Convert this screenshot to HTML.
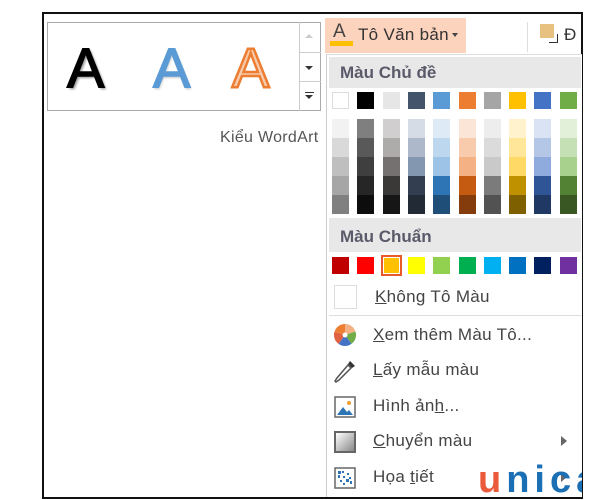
<!DOCTYPE html>
<html><head><meta charset="utf-8"><style>
*{margin:0;padding:0;box-sizing:border-box}
body{width:600px;height:500px;background:#fff;position:relative;overflow:hidden;font-family:"Liberation Sans","DejaVu Sans",sans-serif}
.a{position:absolute}
.sw{position:absolute;width:17px;height:17px}
.sh{position:absolute;width:17px;height:19px}
.t{position:absolute;font-size:17px;color:#444;white-space:nowrap;letter-spacing:0.3px}
u{text-decoration:underline}
</style></head><body>
<div class="a" style="left:42px;top:12px;width:541px;height:487px;border:2px solid #111"></div>
<!-- gallery -->
<div class="a" style="left:47px;top:22px;width:274px;height:89px;border:1px solid #aaa"></div>
<div class="a" style="left:299px;top:22px;width:1px;height:89px;background:#ccc"></div>
<div class="a" style="left:299px;top:52px;width:22px;height:1px;background:#ccc"></div>
<div class="a" style="left:299px;top:81px;width:22px;height:1px;background:#ccc"></div>
<div class="a" style="left:305px;top:34px;width:0;height:0;border-left:4px solid transparent;border-right:4px solid transparent;border-bottom:4px solid #ccc"></div>
<div class="a" style="left:305px;top:66px;width:0;height:0;border-left:4px solid transparent;border-right:4px solid transparent;border-top:4px solid #333"></div>
<div class="a" style="left:305px;top:92px;width:9px;height:1px;background:#333"></div>
<div class="a" style="left:305px;top:95px;width:0;height:0;border-left:4px solid transparent;border-right:4px solid transparent;border-top:4px solid #333"></div>
<div class="t" style="left:67px;top:38px;font-size:56px;color:#000;text-shadow:2px 2px 2px #999;line-height:60px;-webkit-text-stroke:1.5px #000">A</div>
<div class="t" style="left:153px;top:38px;font-size:56px;color:#5b9bd5;text-shadow:1px 2px 2px #ccc;line-height:60px;-webkit-text-stroke:1.5px #5b9bd5">A</div>
<div class="t" style="left:232px;top:38px;font-size:56px;color:#f8cbad;-webkit-text-stroke:2.5px #ed7d31;line-height:60px">A</div>
<div class="t" style="left:220px;top:129px;font-size:16px;color:#555">Kiểu WordArt</div>
<!-- button -->
<div class="a" style="left:325px;top:18px;width:141px;height:35px;background:#fcd3bd"></div>
<div class="t" style="left:333px;top:21px;font-size:19px;color:#444">A</div>
<div class="a" style="left:330px;top:41px;width:23px;height:5px;background:#ffc000"></div>
<div class="t" style="left:358px;top:25px;font-size:17px;color:#333">Tô Văn bản</div>
<div class="a" style="left:452px;top:33px;border-left:3.5px solid transparent;border-right:3.5px solid transparent;border-top:4px solid #444"></div>
<div class="a" style="left:527px;top:22px;width:1px;height:30px;background:#ddd"></div>
<div class="a" style="left:540px;top:24px;width:14px;height:14px;background:#e8c080"></div>
<div class="a" style="left:549px;top:34px;width:9px;height:9px;border-right:1px solid #333;border-bottom:1px solid #333"></div>
<div class="t" style="left:564px;top:25px;font-size:17px;color:#333">Đ</div>
<!-- panel -->
<div class="a" style="left:326px;top:54px;width:256px;height:443px;border-left:1px solid #ccc;border-top:1px solid #ddd;background:#fff"></div>
<div class="a" style="left:329px;top:57px;width:252px;height:31px;background:#e8e8e8"></div>
<div class="t" style="left:340px;top:63px;font-size:17px;font-weight:bold;color:#5a5a6a;letter-spacing:0">Màu Chủ đề</div>
<div class="a" style="left:329px;top:218px;width:252px;height:34px;background:#e8e8e8"></div>
<div class="t" style="left:340px;top:227px;font-size:17px;font-weight:bold;color:#5a5a6a;letter-spacing:0">Màu Chuẩn</div>
<div id="g"></div>
<div class="a" style="left:334px;top:285px;width:23px;height:24px;border:1px solid #ddd"></div>
<div class="t" style="left:375px;top:287px"><u>K</u>hông Tô Màu</div>
<div class="a" style="left:329px;top:315px;width:252px;height:1px;background:#ddd"></div>
<!-- icons -->
<svg class="a" style="left:333px;top:323px" width="24" height="24" viewBox="0 0 24 24">
<path d="M12 12 L12 1 A11 11 0 0 1 22.5 8.6Z" fill="#f4b183"/>
<path d="M12 12 L22.5 8.6 A11 11 0 0 1 18.5 20.9Z" fill="#70ad47"/>
<path d="M12 12 L18.5 20.9 A11 11 0 0 1 5.5 20.9Z" fill="#4472c4"/>
<path d="M12 12 L5.5 20.9 A11 11 0 0 1 1.5 8.6Z" fill="#e06040"/>
<path d="M12 12 L1.5 8.6 A11 11 0 0 1 12 1Z" fill="#ed7d31"/>
<circle cx="12" cy="12" r="2.5" fill="#fff"/></svg>
<svg class="a" style="left:333px;top:359px" width="24" height="26" viewBox="0 0 24 26">
<path d="M17 2 L22 7 L19 9 L15 5Z" fill="#333"/><path d="M15 6 L18 9 L6 21 L3 23 L2 22 L4 19Z" fill="none" stroke="#555" stroke-width="1.5"/></svg>
<svg class="a" style="left:334px;top:396px" width="22" height="22" viewBox="0 0 22 22">
<rect x="1" y="1" width="20" height="20" fill="#fff" stroke="#666" stroke-width="1.5"/><circle cx="15" cy="7" r="2" fill="#f0a030"/><path d="M3 19 L9 11 L13 16 L15 14 L19 19Z" fill="#2e75b6"/></svg>
<div class="a" style="left:334px;top:431px;width:22px;height:22px;border:2px solid #666;background:linear-gradient(135deg,#fff,#888)"></div>
<svg class="a" style="left:334px;top:467px" width="22" height="22" viewBox="0 0 22 22">
<rect x="1" y="1" width="20" height="20" fill="#fff" stroke="#666" stroke-width="1.5"/>
<g fill="#2e75b6"><rect x="4" y="4" width="3" height="3"/><rect x="8" y="4" width="2" height="2"/><rect x="4" y="8" width="2" height="3"/><rect x="9" y="9" width="2" height="2"/><rect x="13" y="6" width="2" height="2"/><rect x="6" y="13" width="2" height="2"/><rect x="12" y="12" width="3" height="3"/><rect x="16" y="14" width="2" height="3"/><rect x="9" y="16" width="2" height="2"/><rect x="15" y="10" width="2" height="2"/></g></svg>
<div class="t" style="left:373px;top:325px"><u>X</u>em thêm Màu Tô...</div>
<div class="t" style="left:373px;top:360px"><u>L</u>ấy mẫu màu</div>
<div class="t" style="left:373px;top:396px">Hình ản<u>h</u>...</div>
<div class="t" style="left:373px;top:431px"><u>C</u>huyển màu</div>
<div class="a" style="left:561px;top:436px;border-top:5px solid transparent;border-bottom:5px solid transparent;border-left:6px solid #666"></div>
<div class="t" style="left:373px;top:467px">Họa <u>t</u>iết</div>
<div class="a" style="left:561px;top:472px;border-top:5px solid transparent;border-bottom:5px solid transparent;border-left:6px solid #666"></div>
<div class="a" style="left:470px;top:450px;width:112px;height:47px;overflow:hidden">
<div class="t" style="left:8px;top:10px;font-size:38px;font-weight:bold;letter-spacing:5px;color:#1b6fb5;line-height:40px"><span style="color:#ec5a3c">u</span>nica</div></div>
<script>
var tc=["#fff","#000","#e7e6e6","#44546a","#5b9bd5","#ed7d31","#a5a5a5","#ffc000","#4472c4","#70ad47"];
var sh=[["#f2f2f2","#d9d9d9","#bfbfbf","#a6a6a6","#808080"],["#7f7f7f","#595959","#3f3f3f","#262626","#0d0d0d"],["#d0cece","#aeabab","#757171","#3b3838","#171616"],["#d6dce5","#adb9ca","#8497b0","#333f50","#222a35"],["#deebf7","#bdd7ee","#9dc3e6","#2e75b6","#1f4e79"],["#fbe5d6","#f8cbad","#f4b183","#c55a11","#843c0c"],["#ededed","#dbdbdb","#c9c9c9","#7b7b7b","#525252"],["#fff2cc","#ffe699","#ffd966","#bf9000","#7f6000"],["#dae3f3","#b4c7e7","#8faadc","#2f5597","#203864"],["#e2f0d9","#c5e0b4","#a9d18e","#548235","#385723"]];
var st=["#c00000","#ff0000","#ffc000","#ffff00","#92d050","#00b050","#00b0f0","#0070c0","#002060","#7030a0"];
var h="";
for(var i=0;i<10;i++){var x=Math.round(332+i*25.3);
h+='<div class="sw" style="left:'+x+'px;top:92px;background:'+tc[i]+';'+(i==0?'border:1px solid #ddd':'')+'"></div>';
for(var j=0;j<5;j++)h+='<div class="sh" style="left:'+x+'px;top:'+(119+j*19)+'px;background:'+sh[i][j]+'"></div>';
h+='<div class="sw" style="left:'+x+'px;top:257px;background:'+st[i]+';'+(i==2?'outline:2px solid #e85a2a;border:1px solid #fff':'')+'"></div>';}
document.getElementById('g').innerHTML=h;
</script>
</body></html>
